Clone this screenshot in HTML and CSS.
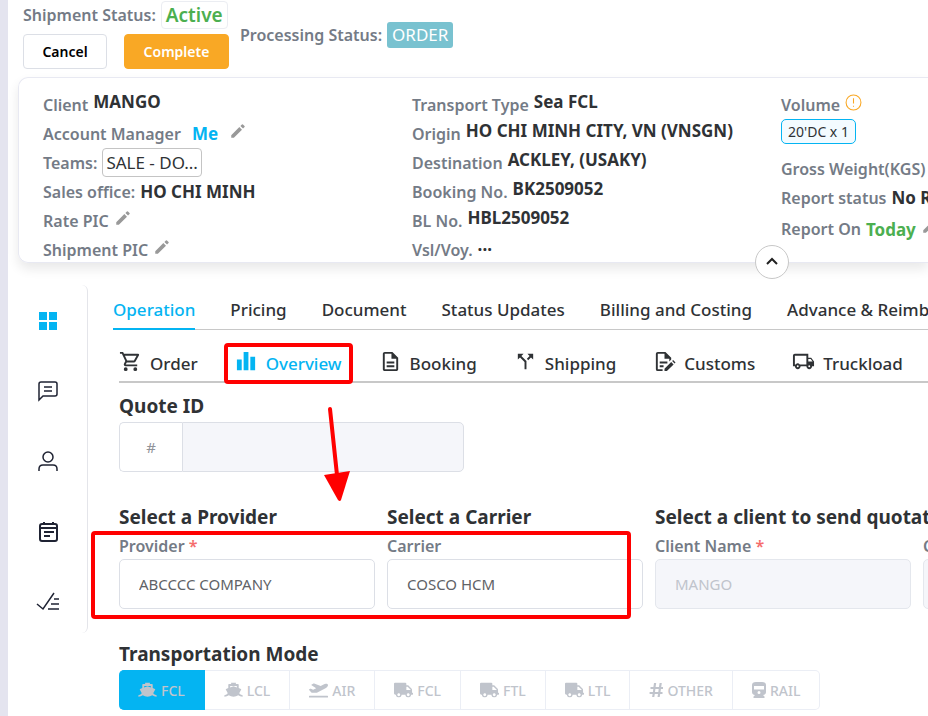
FILE: index.html
```html
<!DOCTYPE html>
<html lang="en">
<head>
  <meta charset="UTF-8">
  <title>Shipment</title>
  <meta name="viewport" content="width=device-width, initial-scale=1">
  <link rel="stylesheet" href="styles.css">
</head>
<body>
  <!-- shared icons -->
  <svg class="sprite" aria-hidden="true">
    <symbol id="pencil" viewBox="0 0 24 24"><path d="M3 17.5V21h3.5L17.3 10.2l-3.5-3.5zM20.7 6.8a1 1 0 0 0 0-1.4l-2.1-2.1a1 1 0 0 0-1.4 0l-2 2 3.5 3.5z"/></symbol>
    <symbol id="ship" viewBox="0 0 20 16"><path fill-rule="evenodd" d="M7.5 0h5v1.6h2.2q.8 0 .8.8V6l2.3.9q.6.3.2.8l-2 3.7q1 1.6 3.6 2V15q-2.800 0-4.600-1.500Q12.800 15 10 15t-5-1.500Q3.200 15 .4 15v-1.600q2.600-.4 3.600-2l-2-3.700q-.4-.5.2-.8L4.500 6V2.400q0-.8.8-.8h2.200zM6.500 3.800v1.500l3.500-1.200 3.500 1.200V3.800z"/></symbol>
    <symbol id="truck" viewBox="0 0 640 512"><path d="M624 352h-16V243.900c0-12.700-5.100-24.900-14.100-33.900L494 110.100c-9-9-21.200-14.100-33.900-14.100H416V48c0-26.500-21.500-48-48-48H48C21.500 0 0 21.500 0 48v320c0 26.500 21.500 48 48 48h16c0 53 43 96 96 96s96-43 96-96h128c0 53 43 96 96 96s96-43 96-96h48c8.800 0 16-7.200 16-16v-32c0-8.800-7.200-16-16-16zM160 464c-26.500 0-48-21.500-48-48s21.500-48 48-48 48 21.500 48 48-21.500 48-48 48zm320 0c-26.500 0-48-21.500-48-48s21.500-48 48-48 48 21.500 48 48-21.500 48-48 48zm80-208H416V144h44.100l99.900 99.900V256z"/></symbol>
  </svg>

  <main class="page">
    <header class="topbar">
      <div class="status-block">
        <div class="status-line">
          <span class="label">Shipment Status:</span>
          <span class="badge-active">Active</span>
        </div>
        <div class="actions">
          <button class="btn" type="button">Cancel</button>
          <button class="btn btn-complete" type="button">Complete</button>
        </div>
      </div>
      <div class="processing">
        <span class="label">Processing Status:</span>
        <span class="badge-order">ORDER</span>
      </div>
    </header>

    <section class="summary">
      <div class="summary-grid">
        <div class="summary-col">
          <div class="row"><span class="label">Client</span><b class="value raised">MANGO</b></div>
          <div class="row"><span class="label">Account Manager</span><b class="value me">Me</b><button class="edit" type="button" aria-label="Edit account manager"><svg><use href="#pencil"/></svg></button></div>
          <div class="row"><span class="label">Teams:</span><span class="team">SALE - DO...</span></div>
          <div class="row"><span class="label">Sales office:</span><b class="value">HO CHI MINH</b></div>
          <div class="row"><span class="label">Rate PIC</span><button class="edit" type="button" aria-label="Edit rate PIC"><svg><use href="#pencil"/></svg></button></div>
          <div class="row"><span class="label">Shipment PIC</span><button class="edit" type="button" aria-label="Edit shipment PIC"><svg><use href="#pencil"/></svg></button></div>
        </div>
        <div class="summary-col">
          <div class="row"><span class="label">Transport Type</span><b class="value raised">Sea FCL</b></div>
          <div class="row"><span class="label">Origin</span><b class="value raised">HO CHI MINH CITY, VN (VNSGN)</b></div>
          <div class="row"><span class="label">Destination</span><b class="value raised">ACKLEY, (USAKY)</b></div>
          <div class="row"><span class="label">Booking No.</span><b class="value raised">BK2509052</b></div>
          <div class="row"><span class="label">BL No.</span><b class="value raised">HBL2509052</b></div>
          <div class="row"><span class="label">Vsl/Voy.</span><b class="value">···</b></div>
        </div>
        <div class="summary-col">
          <div class="row"><span class="label">Volume</span><svg class="warn" viewBox="0 0 16 16"><circle cx="8" cy="8" r="7"/><path d="M8 4v5M8 11v1"/></svg></div>
          <div class="volume"><span class="tag">20'DC x 1</span></div>
          <div class="row"><span class="label">Gross Weight(KGS)</span></div>
          <div class="row"><span class="label">Report status</span><b class="value">No Report</b></div>
          <div class="row row-tall"><span class="label">Report On</span><b class="value today">Today</b><button class="edit" type="button" aria-label="Edit report date"><svg><use href="#pencil"/></svg></button></div>
        </div>
      </div>
      <button class="collapse" type="button" aria-label="Collapse summary"><svg viewBox="0 0 16 16"><path d="M3 10l5-5 5 5"/></svg></button>
    </section>

    <div class="workspace">
      <nav class="side" aria-label="Sections">
        <a class="side-link active" href="#" aria-label="Dashboard"><svg viewBox="0 0 24 24"><path class="fill" d="M3 3h8v8H3zM13 3h8v8h-8zM3 13h8v8H3zM13 13h8v8h-8z"/></svg></a>
        <a class="side-link" href="#" aria-label="Messages"><svg viewBox="0 0 24 24"><path d="M3 21V5q0-2 2-2h14q2 0 2 2v10q0 2-2 2H7zM8 8h8M8 12h8"/></svg></a>
        <a class="side-link" href="#" aria-label="People"><svg viewBox="0 0 24 24"><circle cx="12" cy="8" r="5"/><path d="M3 22v-2q0-4 4-4h10q4 0 4 4v2"/></svg></a>
        <a class="side-link" href="#" aria-label="Notes"><svg viewBox="0 0 24 24"><path class="thick" d="M6 5h13q2 0 2 2v13q0 2-2 2H6q-2 0-2-2V7q0-2 2-2zM4 9h17M8 3v3M17 3v3M8 13h10M8 17h6"/></svg></a>
        <a class="side-link" href="#" aria-label="Tasks"><svg viewBox="0 0 24 24"><path d="M1 15l6 5L18 4M18 10h5M15 15h8M12 20h11"/></svg></a>
      </nav>

      <div class="content">
        <nav class="tabs" aria-label="Shipment">
          <a class="tab active" href="#">Operation</a>
          <a class="tab" href="#">Pricing</a>
          <a class="tab" href="#">Document</a>
          <a class="tab" href="#">Status Updates</a>
          <a class="tab" href="#">Billing and Costing</a>
          <a class="tab" href="#">Advance &amp; Reimbursement</a>
        </nav>

        <div class="panel">
          <nav class="subtabs" aria-label="Operation">
            <a class="subtab" href="#"><svg viewBox="0 0 24 24"><path d="M15.550 13c.75 0 1.410-.41 1.750-1.030l3.580-6.490c.37-.66-.11-1.480-.87-1.480H5.210l-.94-2H1v2h2l3.600 7.590-1.350 2.440C4.520 15.370 5.480 17 7 17h12v-2H7l1.100-2h7.450zM6.160 6h12.150l-2.760 5H8.530L6.160 6zM7 18a2 2 0 1 0 0 4 2 2 0 0 0 0-4zm10 0a2 2 0 1 0 0 4 2 2 0 0 0 0-4z"/></svg>Order</a>
            <a class="subtab active" href="#"><svg viewBox="0 0 24 24"><path d="M2 10h5v11H2zM9 2h5v19H9zM16 7h5v14h-5z"/></svg>Overview</a>
            <a class="subtab" href="#"><svg viewBox="0 0 24 24"><path d="M8 16h8v2H8zm0-4h8v2H8zm6-10H6c-1.100 0-2 .9-2 2v16c0 1.100.89 2 1.990 2H18c1.100 0 2-.9 2-2V8l-6-6zm4 18H6V4h7v5h5v11z"/></svg>Booking</a>
            <a class="subtab" href="#"><svg viewBox="0 0 24 24"><path d="M14 4l2.290 2.290-2.880 2.880 1.420 1.420 2.880-2.880L20 10V4zm-4 0H4v6l2.290-2.290 4.710 4.700V20h2v-8.410l-5.290-5.300z"/></svg>Shipping</a>
            <a class="subtab" href="#"><svg viewBox="0 0 24 24"><path d="M13 2H5q-2 0-2 2v16q0 2 2 2h5v-2H5V4h7v5h5v3l2-2V8zM7 12h8v2H7zM7 16h4v2H7zM12 22v-2.500l7-7 2.500 2.500-7 7zM20 11.500l1-1 2.500 2.500-1 1z"/></svg>Customs</a>
            <a class="subtab" href="#"><svg viewBox="0 0 24 24"><path fill-rule="evenodd" d="M20 8h-3V4H3c-1.100 0-2 .9-2 2v11h2c0 1.660 1.340 3 3 3s3-1.340 3-3h6c0 1.660 1.340 3 3 3s3-1.340 3-3h2v-5l-3-4zM6 18a1 1 0 1 1 0-2 1 1 0 0 1 0 2zm9-3H8.200a3 3 0 0 0-4.400 0H3V6h12zm3 3a1 1 0 1 1 0-2 1 1 0 0 1 0 2zm-1-6V9.500h2.500L21.500 12z"/></svg>Truckload</a>
          </nav>

          <form class="form">
            <h3 class="title"><label for="quote">Quote ID</label></h3>
            <div class="quote">
              <span class="prefix">#</span>
              <input class="input" id="quote" type="text" disabled>
            </div>

            <div class="fields">
              <div class="field">
                <h3 class="title">Select a Provider</h3>
                <label class="label" for="provider">Provider <span class="req">*</span></label>
                <input class="input" id="provider" type="text" value="ABCCCC COMPANY">
              </div>
              <div class="field">
                <h3 class="title">Select a Carrier</h3>
                <label class="label" for="carrier">Carrier</label>
                <input class="input" id="carrier" type="text" value="COSCO HCM">
              </div>
              <div class="field">
                <h3 class="title">Select a client to send quotation</h3>
                <label class="label" for="client">Client Name <span class="req">*</span></label>
                <input class="input" id="client" type="text" value="MANGO" disabled>
              </div>
              <div class="field field-last">
                <label class="label" for="contact">Contact</label>
                <input class="input" id="contact" type="text" disabled>
              </div>
            </div>

            <h3 class="title">Transportation Mode</h3>
            <div class="modes">
              <label class="mode"><input type="radio" name="mode" checked disabled><svg viewBox="0 0 20 16"><use href="#ship"/></svg>FCL</label>
              <label class="mode"><input type="radio" name="mode" disabled><svg viewBox="0 0 20 16"><use href="#ship"/></svg>LCL</label>
              <label class="mode"><input type="radio" name="mode" disabled><svg viewBox="0 0 640 512"><path d="M624 448H16c-8.840 0-16 7.160-16 16v32c0 8.840 7.160 16 16 16h608c8.840 0 16-7.160 16-16v-32c0-8.840-7.160-16-16-16zM80.550 341.270c6.280 6.840 15.100 10.720 24.330 10.710l130.540-.18a65.620 65.620 0 0 0 29.640-7.120l290.960-147.650c26.740-13.570 50.710-32.940 67.020-58.310 18.310-28.480 20.300-49.090 13.070-63.650-7.210-14.570-24.740-25.270-58.250-27.450-29.850-1.940-59.540 5.920-86.280 19.480l-98.510 49.990-218.700-82.060a17.800 17.800 0 0 0-18-1.110L90.620 67.290c-10.670 5.410-13.250 19.650-5.170 28.530l156.220 98.100-103.210 52.380-72.350-36.470a17.800 17.800 0 0 0-16.070.02L9.910 230.220c-10.440 5.300-13.190 19.120-5.570 28.080l76.210 82.970z"/></svg>AIR</label>
              <label class="mode"><input type="radio" name="mode" disabled><svg viewBox="0 0 640 512"><use href="#truck"/></svg>FCL</label>
              <label class="mode"><input type="radio" name="mode" disabled><svg viewBox="0 0 640 512"><use href="#truck"/></svg>FTL</label>
              <label class="mode"><input type="radio" name="mode" disabled><svg viewBox="0 0 640 512"><use href="#truck"/></svg>LTL</label>
              <label class="mode"><input type="radio" name="mode" disabled><svg class="slim" viewBox="0 0 14 16"><path fill-rule="evenodd" d="M5 1h2.200l-.6 4H10l.6-4h2.200l-.6 4H14v2h-2.100l-.4 3h2v2h-2.300l-.5 3H8.500l.5-3H5.800l-.5 3H3.100l.5-3H.6v-2h3.300l.4-3H1.500V5h2.900zM6.400 7L6 10h3.300l.4-3z"/></svg>OTHER</label>
              <label class="mode"><input type="radio" name="mode" disabled><svg class="slim" viewBox="0 0 14 16"><path fill-rule="evenodd" d="M4 0h6q4 0 4 3v7q0 2.500-3 3l1.500 1.500V16h-11v-1.500L3 13q-3-.5-3-3V3q0-3 4-3zM2 4v3.500h10V4zM7 9a1.500 1.500 0 1 0 0 3 1.500 1.500 0 0 0 0-3z"/></svg>RAIL</label>
            </div>
          </form>
        </div>
      </div>
    </div>

    <!-- guide marks -->
    <div class="mark mark-tab"></div>
    <div class="mark mark-fields"></div>
    <svg class="arrow" viewBox="0 0 30 96"><path class="shaft" d="M8 4l7 66"/><path class="head" d="M2 70l26-4-9 29q-1 2-3 0z"/></svg>
  </main>
</body>
</html>
```
FILE: styles.css
```css
:root {
  --accent: #04b4f2;
  --text: #2f3235;
  --muted: #747b86;
  --border: #dcdfe6;
  --disabled: #f5f6fa;
  --red: #ff0000;
}
* {
  box-sizing: border-box;
}
body {
  margin: 0;
  background: #fff;
  color: var(--text);
  font-family: "Noto Sans", "Open Sans", sans-serif;
  font-size: 17px;
  overflow-x: hidden;
}
button, input {
  font-family: inherit;
}
a {
  color: inherit;
  text-decoration: none;
}
.sprite {
  display: none;
}
.page {
  position: relative;
  min-height: 100vh;
  border-left: 8px solid #e4e4ef;
  overflow: hidden;
}
.label {
  color: var(--muted);
  font-size: 16px;
  font-weight: 600;
  white-space: nowrap;
}

/* top bar */
.topbar {
  display: flex;
  align-items: center;
  gap: 11px;
  height: 69px;
  padding-left: 15px;
}
.status-line {
  display: flex;
  align-items: center;
  gap: 5px;
  height: 30px;
}
.badge-active {
  padding: 0 4px;
  border: 1px solid #ebedf2;
  border-radius: 4px;
  color: #4caf50;
  font-size: 19px;
  font-weight: 600;
  line-height: 26px;
}
.actions {
  display: flex;
  gap: 17px;
  padding-top: 4px;
}
.btn {
  height: 35px;
  min-width: 84px;
  padding: 0 18px;
  border: 1px solid var(--border);
  border-radius: 4px;
  background: #fff;
  color: #000;
  font-size: 14px;
  font-weight: 600;
}
.btn-complete {
  min-width: 105px;
  border-color: #f9a825;
  background: #f9a825;
  color: #fff;
}
.processing {
  display: flex;
  align-items: center;
  gap: 5px;
}
.badge-order {
  padding: 0 5px;
  border-radius: 3px;
  background: #79c2d0;
  color: #fff;
  font-size: 17px;
  line-height: 26px;
}

/* summary card */
.summary {
  position: relative;
  margin: 8px 0 0 10px;
  padding: 12px 0 0 24px;
  height: 186px;
  border: 1px solid #e8e9f2;
  border-right: 0;
  border-radius: 10px 0 0 10px;
  box-shadow: 0 6px 12px rgba(0, 0, 0, 0.09);
}
.summary-grid {
  display: grid;
  grid-template-columns: repeat(3, minmax(369px, 1fr));
}
.row {
  display: flex;
  align-items: center;
  gap: 5px;
  height: 29px;
}
.value {
  font-size: 17px;
  font-weight: 700;
  white-space: nowrap;
}
.raised {
  padding-bottom: 6px;
}
.me {
  padding: 0 6px;
  color: var(--accent);
}
.today {
  color: #4caf50;
}
.edit {
  display: flex;
  padding: 0 0 6px;
  border: 0;
  background: none;
}
.edit svg {
  width: 18px;
  height: 18px;
  fill: #999;
}
.team {
  padding: 0 3px;
  border: 1px solid #c4c4c4;
  border-radius: 4px;
  line-height: 27px;
}
.warn {
  width: 17px;
  height: 17px;
  margin-bottom: 5px;
  fill: none;
  stroke: #f9a825;
}
.volume {
  display: flex;
  align-items: flex-start;
  height: 35px;
}
.tag {
  padding: 0 6px;
  border: 1px solid var(--accent);
  border-radius: 5px;
  background: #f3fbff;
  font-size: 14px;
  line-height: 23px;
}
.row-tall {
  height: 34px;
}
.collapse {
  position: absolute;
  left: 736px;
  bottom: -17px;
  display: grid;
  place-items: center;
  width: 34px;
  height: 34px;
  padding: 0;
  border: 1px solid #c8c8c8;
  border-radius: 50%;
  background: #fff;
}
.collapse svg {
  width: 16px;
  height: 16px;
  fill: none;
  stroke: #222;
  stroke-width: 2;
}

/* side menu */
.workspace {
  display: flex;
  align-items: flex-start;
  margin-top: 22px;
}
.side {
  display: flex;
  flex: none;
  flex-direction: column;
  align-items: center;
  gap: 46px;
  width: 80px;
  height: 348px;
  padding-top: 24px;
  border-right: 1px solid #e4e5ea;
  border-radius: 0 6px 6px 0;
}
.side-link {
  display: flex;
}
.side-link svg {
  width: 24px;
  height: 24px;
  fill: none;
  stroke: #1f2333;
  stroke-width: 1.5;
}
.side-link .thick {
  stroke-width: 2;
}
.side-link .fill {
  fill: var(--accent);
  stroke: none;
}

/* tabs */
.content {
  flex: 1;
  min-width: 0;
  padding-left: 25px;
}
.tabs {
  display: flex;
  gap: 35px;
  padding-top: 7px;
  border-bottom: 1px solid #c8c8c8;
}
.tab {
  margin-bottom: -1px;
  font-weight: 500;
  line-height: 36px;
  white-space: nowrap;
  border-bottom: 2px solid transparent;
}
.tab.active {
  color: var(--accent);
  border-color: var(--accent);
}
.panel {
  padding-left: 6px;
}
.subtabs {
  display: flex;
  gap: 37px;
  height: 53px;
  padding-top: 16px;
  border-bottom: 2px solid #c8c8c8;
}
.subtab {
  display: flex;
  gap: 8px;
  font-weight: 500;
  line-height: 36px;
  white-space: nowrap;
}
.subtab svg {
  width: 23px;
  height: 23px;
  margin-top: 4px;
  fill: currentColor;
}
.subtab.active {
  color: var(--accent);
}

/* form */
.title {
  margin: 0;
  font-size: 19px;
  font-weight: 700;
  line-height: 32px;
  white-space: nowrap;
}
.form {
  padding-top: 7px;
}
.input {
  width: 100%;
  height: 50px;
  padding: 0 19px;
  border: 1px solid var(--border);
  border-radius: 5px;
  background: #fff;
  color: #606266;
  font-size: 15px;
}
.input:disabled {
  border-color: #e4e7ed;
  background: var(--disabled);
  color: #c0c4cc;
}
.quote {
  display: flex;
  width: 345px;
}
.prefix {
  flex: none;
  width: 63px;
  border: 1px solid var(--border);
  border-right: 0;
  border-radius: 5px 0 0 5px;
  color: #909399;
  font-size: 15px;
  line-height: 48px;
  text-align: center;
}
.quote .input {
  border-color: var(--border);
  border-radius: 0 5px 5px 0;
}
.fields {
  display: grid;
  grid-template-columns: repeat(4, 256px);
  gap: 12px;
  padding: 29px 0;
}
.field .label {
  display: block;
  line-height: 26px;
}
.field-last {
  align-self: end;
}
.req {
  color: #f56c6c;
}
.modes {
  display: flex;
}
.mode {
  display: flex;
  align-items: center;
  justify-content: center;
  gap: 4px;
  height: 40px;
  padding: 0 19px;
  border: 1px solid #ebeef5;
  border-left: 0;
  color: #c0c4cc;
  font-size: 14px;
  font-weight: 500;
}
.mode:first-child {
  border-radius: 5px 0 0 5px;
}
.mode:last-child {
  border-radius: 0 5px 5px 0;
}
.mode input {
  position: absolute;
  opacity: 0;
}
.mode:has(input:checked) {
  border-color: var(--accent);
  background: var(--accent);
}
.mode svg {
  width: 19px;
  height: 16px;
  fill: currentColor;
}
.mode .slim {
  width: 14px;
}

/* guide marks, drawn over the page */
.mark {
  position: absolute;
  border: 4px solid var(--red);
  border-radius: 4px;
  pointer-events: none;
}
.mark-tab {
  left: 216px;
  top: 343px;
  width: 129px;
  height: 41px;
}
.mark-fields {
  left: 83px;
  top: 531px;
  width: 540px;
  height: 88px;
}
.arrow {
  position: absolute;
  left: 314px;
  top: 405px;
  width: 30px;
  height: 96px;
  pointer-events: none;
}
.shaft {
  fill: none;
  stroke: var(--red);
  stroke-width: 4;
  stroke-linecap: round;
}
.head {
  fill: var(--red);
}
```
